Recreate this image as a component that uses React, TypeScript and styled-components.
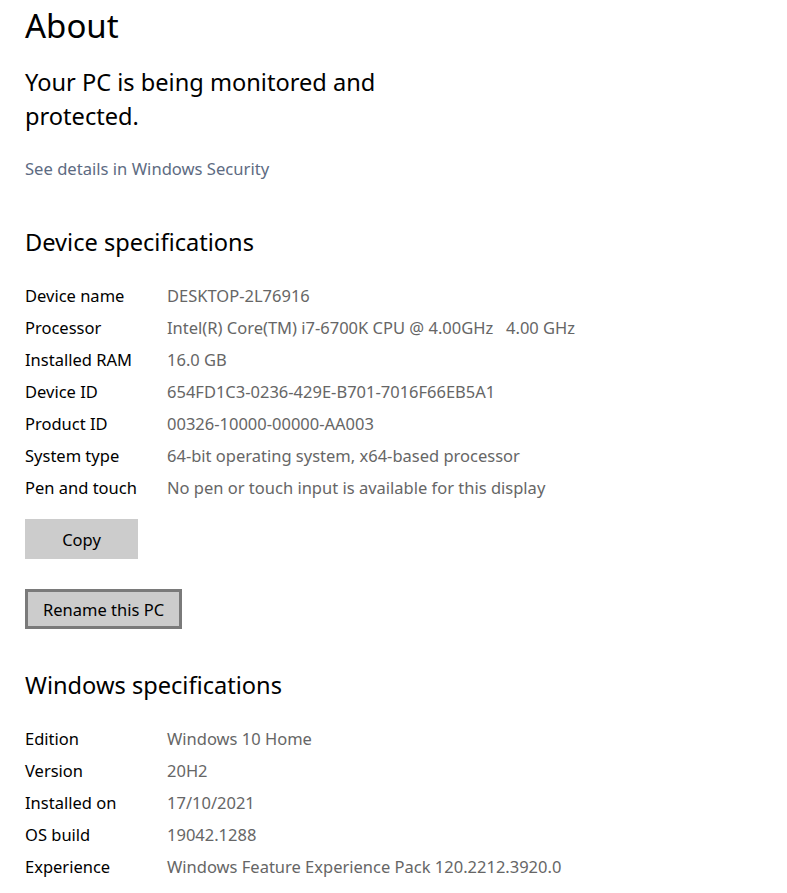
import { FC, Fragment } from "react";
import styled, { createGlobalStyle } from "styled-components";

const GlobalStyle = createGlobalStyle`
  html, body {
    margin: 0;
    padding: 0;
    background: #ffffff;
  }
  body {
    font-family: "Noto Sans", "Open Sans", sans-serif;
    color: #000000;
  }
`;

const Page = styled.main`
  display: flex;
  flex-direction: column;
  align-items: flex-start;
  padding: 0 0 0 25px;
`;

const Title = styled.h1`
  margin: 0;
  font-size: 33px;
  font-weight: 400;
  line-height: 52px;
`;

const Status = styled.p`
  margin: 13px 0 0;
  width: 360px;
  font-size: 23.6px;
  font-weight: 400;
  line-height: 34px;
`;

const Link = styled.a`
  margin-top: 25px;
  font-size: 16.6px;
  line-height: 22px;
  color: #5d6b82;
  text-decoration: none;
`;

const SectionHeading = styled.h2<{ $top: number }>`
  margin: 0;
  margin-top: ${(p) => p.$top}px;
  font-size: 23.6px;
  font-weight: 400;
  line-height: 32px;
`;

const SpecTable = styled.dl`
  display: grid;
  grid-template-columns: 142px auto;
  grid-auto-rows: 32px;
  align-items: center;
  margin: 21px 0 0;
  font-size: 16.5px;
`;

const SpecLabel = styled.dt`
  margin: 0;
  color: #000000;
`;

const SpecValue = styled.dd`
  margin: 0;
  color: #666666;
  white-space: pre;
`;

const Button = styled.button<{ $focused?: boolean }>`
  font-family: inherit;
  font-size: 16.5px;
  color: #000000;
  background: #cccccc;
  border: ${(p) => (p.$focused ? "3px solid #7a7a7a" : "3px solid transparent")};
  height: 40px;
  padding: 0 15px;
  min-width: 113px;
  margin-top: ${(p) => (p.$focused ? 30 : 16)}px;
  cursor: default;
`;

const deviceSpecs: [string, string][] = [
  ["Device name", "DESKTOP-2L76916"],
  ["Processor", "Intel(R) Core(TM) i7-6700K CPU @ 4.00GHz   4.00 GHz"],
  ["Installed RAM", "16.0 GB"],
  ["Device ID", "654FD1C3-0236-429E-B701-7016F66EB5A1"],
  ["Product ID", "00326-10000-00000-AA003"],
  ["System type", "64-bit operating system, x64-based processor"],
  ["Pen and touch", "No pen or touch input is available for this display"],
];

const windowsSpecs: [string, string][] = [
  ["Edition", "Windows 10 Home"],
  ["Version", "20H2"],
  ["Installed on", "17/10/2021"],
  ["OS build", "19042.1288"],
  ["Experience", "Windows Feature Experience Pack 120.2212.3920.0"],
];

const Specs: FC<{ rows: [string, string][] }> = ({ rows }) => (
  <SpecTable>
    {rows.map(([label, value]) => (
      <Fragment key={label}>
        <SpecLabel>{label}</SpecLabel>
        <SpecValue>{value}</SpecValue>
      </Fragment>
    ))}
  </SpecTable>
);

export default function App() {
  return (
    <>
      <GlobalStyle />
      <Page>
        <Title>About</Title>
        <Status>Your PC is being monitored and protected.</Status>
        <Link href="#">See details in Windows Security</Link>
        <SectionHeading $top={46}>Device specifications</SectionHeading>
        <Specs rows={deviceSpecs} />
        <Button>Copy</Button>
        <Button $focused>Rename this PC</Button>
        <SectionHeading $top={40}>Windows specifications</SectionHeading>
        <Specs rows={windowsSpecs} />
      </Page>
    </>
  );
}
